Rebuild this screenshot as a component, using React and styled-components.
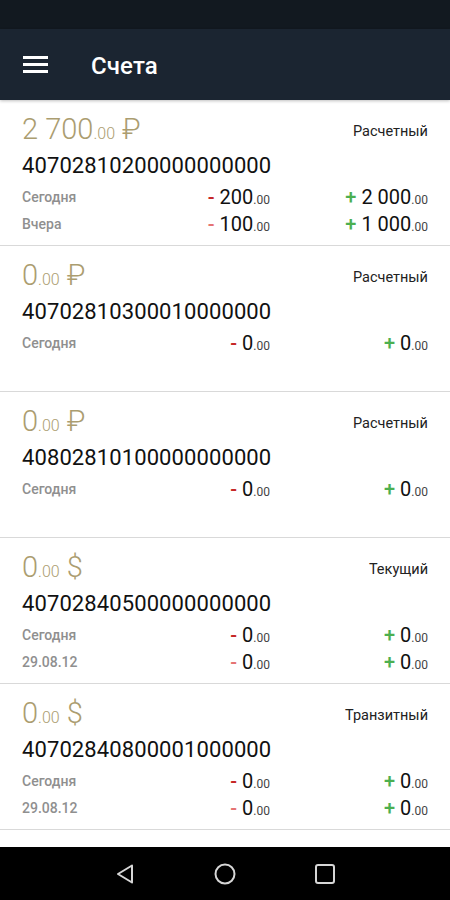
import styled, { createGlobalStyle } from "styled-components";

const GlobalStyle = createGlobalStyle`
  html, body {
    margin: 0;
    padding: 0;
    background: #ffffff;
  }
  body {
    font-family: Roboto, "Noto Sans", "Liberation Sans", sans-serif;
  }
`;

const accounts = [
  {
    balance: "2 700",
    cents: "00",
    currency: "₽",
    type: "Расчетный",
    number: "40702810200000000000",
    rows: [
      { label: "Сегодня", minus: "200", plus: "2 000" },
      { label: "Вчера", minus: "100", plus: "1 000", faded: true },
    ],
  },
  {
    balance: "0",
    cents: "00",
    currency: "₽",
    type: "Расчетный",
    number: "40702810300010000000",
    rows: [{ label: "Сегодня", minus: "0", plus: "0" }],
  },
  {
    balance: "0",
    cents: "00",
    currency: "₽",
    type: "Расчетный",
    number: "40802810100000000000",
    rows: [{ label: "Сегодня", minus: "0", plus: "0" }],
  },
  {
    balance: "0",
    cents: "00",
    currency: "$",
    type: "Текущий",
    number: "40702840500000000000",
    rows: [
      { label: "Сегодня", minus: "0", plus: "0" },
      { label: "29.08.12", minus: "0", plus: "0", faded: true },
    ],
  },
  {
    balance: "0",
    cents: "00",
    currency: "$",
    type: "Транзитный",
    number: "40702840800001000000",
    rows: [
      { label: "Сегодня", minus: "0", plus: "0" },
      { label: "29.08.12", minus: "0", plus: "0", faded: true },
    ],
  },
];

const Amount = ({ sign, value, faded }) => (
  <AmountText>
    <Sign $plus={sign === "+"} $faded={faded}>{sign}</Sign> {value}
    <Cents>.00</Cents>
  </AmountText>
);

const AccountCard = ({ account }) => (
  <Card>
    <TopRow>
      <Balance>
        {account.balance}
        <BalanceCents>.{account.cents}</BalanceCents> {account.currency}
      </Balance>
      <TypeLabel>{account.type}</TypeLabel>
    </TopRow>
    <AccountNumber>{account.number}</AccountNumber>
    {account.rows.map((row, i) => (
      <MoveRow key={i}>
        <DayLabel>{row.label}</DayLabel>
        <Amount sign="-" value={row.minus} faded={row.faded} />
        <Amount sign="+" value={row.plus} />
      </MoveRow>
    ))}
  </Card>
);

export default function App() {
  return (
    <Screen>
      <GlobalStyle />
      <StatusBar />
      <AppBar>
        <svg width="25" height="17" viewBox="0 0 25 17">
          <rect x="0" y="0" width="25" height="3" fill="#fff" />
          <rect x="0" y="7" width="25" height="3" fill="#fff" />
          <rect x="0" y="14" width="25" height="3" fill="#fff" />
        </svg>
        <Title>Счета</Title>
      </AppBar>
      <List>
        {accounts.map((acc) => (
          <AccountCard key={acc.number} account={acc} />
        ))}
      </List>
      <NavBar>
        <NavButton>
          <svg width="20" height="22" viewBox="0 0 20 22">
            <path d="M17 2.5 L3 11 L17 19.5 Z" fill="none" stroke="#d6d6d6" strokeWidth="2" strokeLinejoin="round" />
          </svg>
        </NavButton>
        <NavButton>
          <svg width="22" height="22" viewBox="0 0 22 22">
            <circle cx="11" cy="11" r="9.5" fill="none" stroke="#d6d6d6" strokeWidth="2" />
          </svg>
        </NavButton>
        <NavButton>
          <svg width="22" height="22" viewBox="0 0 22 22">
            <rect x="2" y="2" width="18" height="18" rx="2" fill="none" stroke="#d6d6d6" strokeWidth="2" />
          </svg>
        </NavButton>
      </NavBar>
    </Screen>
  );
}

const Screen = styled.div`
  width: 450px;
  height: 900px;
  display: flex;
  flex-direction: column;
  overflow: hidden;
  background: #ffffff;
`;

const StatusBar = styled.div`
  height: 29px;
  flex-shrink: 0;
  background: #121920;
`;

const AppBar = styled.div`
  height: 71px;
  flex-shrink: 0;
  background: #1b2531;
  display: flex;
  align-items: center;
  padding-left: 23px;
  box-shadow: 0 1px 3px rgba(0, 0, 0, 0.25);
  position: relative;
  z-index: 1;
`;

const Title = styled.div`
  margin-left: 43px;
  margin-top: 3px;
  color: #ffffff;
  font-size: 24px;
  font-weight: 500;
  letter-spacing: 0.1px;
`;

const List = styled.div`
  flex: 1;
  overflow: hidden;
  background: #ffffff;
`;

const Card = styled.div`
  height: 146px;
  box-sizing: border-box;
  padding: 14px 22px 0 22px;
  border-bottom: 1px solid #d9d9d9;
`;

const TopRow = styled.div`
  display: flex;
  justify-content: space-between;
  align-items: center;
  height: 34px;
`;

const Balance = styled.div`
  color: #ab9d70;
  font-size: 29px;
  font-weight: 300;
  line-height: 34px;
  white-space: nowrap;
`;

const BalanceCents = styled.span`
  font-size: 16px;
`;

const TypeLabel = styled.div`
  color: #222222;
  font-size: 14.5px;
  font-weight: 400;
`;

const AccountNumber = styled.div`
  margin-top: 5px;
  color: #111111;
  font-size: 22px;
  line-height: 26px;
  letter-spacing: 0.1px;
`;

const MoveRow = styled.div`
  display: grid;
  grid-template-columns: 120px 128px 158px;
  align-items: center;
  height: 27px;
  &:nth-child(3) {
    margin-top: 4px;
  }
`;

const DayLabel = styled.div`
  color: #8f8f8f;
  font-size: 14px;
  font-weight: 500;
`;

const AmountText = styled.div`
  text-align: right;
  color: #111111;
  font-size: 20px;
  white-space: nowrap;
`;

const Sign = styled.span`
  color: ${(p) => (p.$plus ? "#4caf50" : p.$faded ? "#e57373" : "#c62828")};
  font-weight: 500;
`;

const Cents = styled.span`
  font-size: 12px;
  color: #444444;
`;

const NavBar = styled.div`
  height: 53px;
  flex-shrink: 0;
  background: #000000;
  display: flex;
  align-items: center;
  justify-content: center;
  gap: 78px;
`;

const NavButton = styled.div`
  width: 22px;
  height: 22px;
  display: flex;
  align-items: center;
  justify-content: center;
`;
